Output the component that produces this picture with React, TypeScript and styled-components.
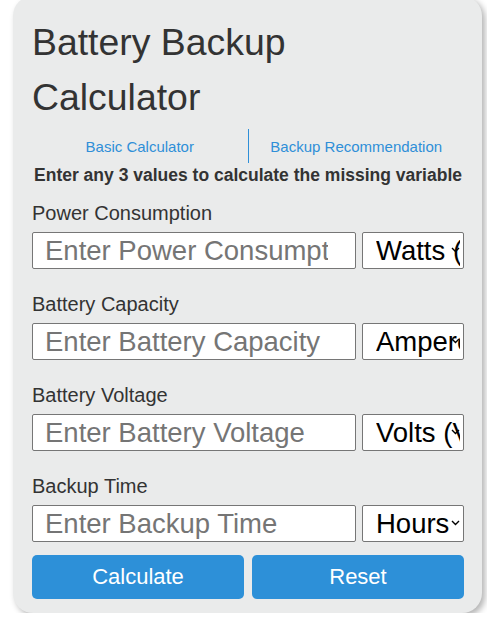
import React from "react";
import styled, { createGlobalStyle } from "styled-components";

const GlobalStyle = createGlobalStyle`
  html, body {
    margin: 0;
    padding: 0;
    background: #ffffff;
    font-family: "Liberation Sans", Arial, sans-serif;
  }
`;

const Card = styled.div`
  margin: -4px 5px 0 13px;
  padding: 19px 18px 14px 19px;
  background: #eaebeb;
  border-radius: 20px;
  box-shadow: 3px 3px 6px rgba(0, 0, 0, 0.3);
  color: #333333;
`;

const Title = styled.h1`
  margin: 0;
  max-width: 400px;
  font-size: 37.4px;
  line-height: 55px;
  font-weight: 400;
  color: #333333;
`;

const Tabs = styled.nav`
  display: flex;
  margin-top: 4px;
  height: 34px;
`;

const Tab = styled.a<{ divided?: boolean }>`
  flex: 1;
  display: flex;
  align-items: center;
  justify-content: center;
  font-size: 15px;
  color: #2f8fd8;
  text-decoration: none;
  border-right: ${({ divided }) => (divided ? "1px solid #2f8fd8" : "none")};
`;

const Instructions = styled.p`
  margin: 2px 0 0 0;
  font-size: 17.5px;
  line-height: 20px;
  font-weight: 700;
  text-align: center;
  color: #333333;
`;

const Fields = styled.div`
  display: flex;
  flex-direction: column;
  gap: 23px;
  margin-top: 16px;
`;

const Field = styled.div`
  display: flex;
  flex-direction: column;
  gap: 7px;
`;

const Label = styled.label`
  font-size: 20px;
  line-height: 24px;
  color: #333333;
`;

const InputRow = styled.div`
  display: flex;
  gap: 6px;
`;

const TextInput = styled.input`
  flex: 1;
  min-width: 0;
  box-sizing: border-box;
  height: 37px;
  margin: 0;
  padding: 0 12px;
  border: 1px solid #767676;
  border-radius: 2px;
  background: #ffffff;
  font-family: "Liberation Sans", Arial, sans-serif;
  font-size: 27.5px;
  color: #000000;

  &::placeholder {
    color: #757575;
  }
`;

const SelectWrap = styled.div`
  position: relative;
  width: 102px;
  height: 37px;
`;

const UnitSelect = styled.select`
  appearance: none;
  box-sizing: border-box;
  width: 100%;
  height: 100%;
  margin: 0;
  padding: 0 3px 0 13px;
  border: 1px solid #767676;
  border-radius: 2px;
  background: #ffffff;
  font-family: "Liberation Sans", Arial, sans-serif;
  font-size: 27.5px;
  color: #000000;
`;

const Chevron = styled.svg`
  position: absolute;
  right: 4px;
  top: 15px;
  width: 9px;
  height: 6px;
  pointer-events: none;
`;

const ButtonRow = styled.div`
  display: flex;
  gap: 8px;
  margin-top: 13px;
`;

const Button = styled.button`
  flex: 1;
  height: 44px;
  border: none;
  border-radius: 5px;
  background: #2d90d8;
  color: #ffffff;
  font-family: "Liberation Sans", Arial, sans-serif;
  font-size: 22px;
  cursor: pointer;
`;

const fields = [
  {
    label: "Power Consumption",
    placeholder: "Enter Power Consumption",
    units: ["Watts (W)", "Kilowatts (kW)"],
  },
  {
    label: "Battery Capacity",
    placeholder: "Enter Battery Capacity",
    units: ["Ampere-hours (Ah)", "Milliampere-hours (mAh)"],
  },
  {
    label: "Battery Voltage",
    placeholder: "Enter Battery Voltage",
    units: ["Volts (V)", "Millivolts (mV)"],
  },
  {
    label: "Backup Time",
    placeholder: "Enter Backup Time",
    units: ["Hours", "Minutes"],
  },
];

export default function App() {
  return (
    <>
      <GlobalStyle />
      <Card>
        <Title>Battery Backup Calculator</Title>
        <Tabs>
          <Tab href="#" divided>
            Basic Calculator
          </Tab>
          <Tab href="#">Backup Recommendation</Tab>
        </Tabs>
        <Instructions>
          Enter any 3 values to calculate the missing variable
        </Instructions>
        <Fields>
          {fields.map((f) => (
            <Field key={f.label}>
              <Label>{f.label}</Label>
              <InputRow>
                <TextInput type="number" placeholder={f.placeholder} />
                <SelectWrap>
                  <UnitSelect defaultValue={f.units[0]}>
                    {f.units.map((u) => (
                      <option key={u}>{u}</option>
                    ))}
                  </UnitSelect>
                  <Chevron viewBox="0 0 9 6">
                    <path
                      d="M1 1l3.5 3.5L8 1"
                      fill="none"
                      stroke="#000"
                      strokeWidth="1.4"
                    />
                  </Chevron>
                </SelectWrap>
              </InputRow>
            </Field>
          ))}
        </Fields>
        <ButtonRow>
          <Button>Calculate</Button>
          <Button>Reset</Button>
        </ButtonRow>
      </Card>
    </>
  );
}
